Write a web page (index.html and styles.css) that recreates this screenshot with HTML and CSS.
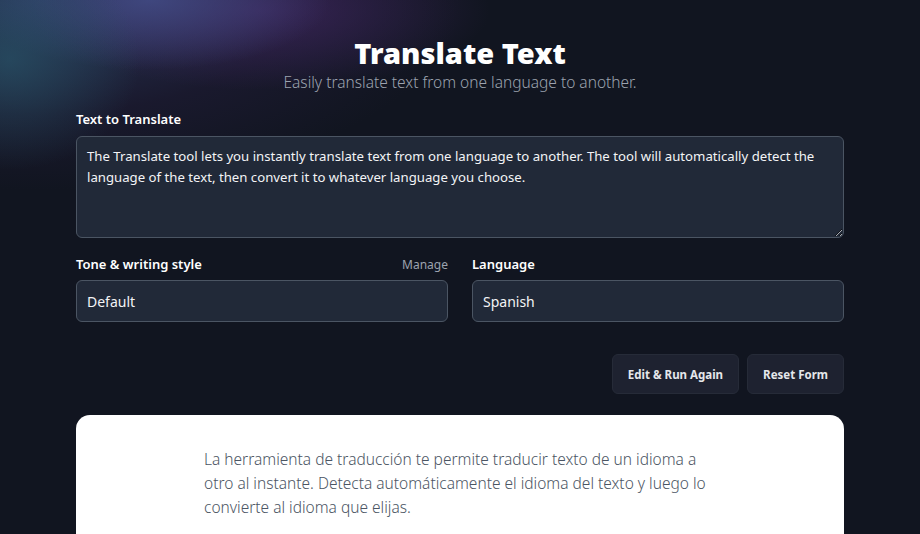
FILE: index.html
```html
<!DOCTYPE html>
<html lang="en">
<head>
    <meta charset="UTF-8">
    <meta name="viewport" content="width=device-width, initial-scale=1.0">
    <title>Translate Text</title>
    <link rel="stylesheet" href="styles.css">
</head>
<body>
    <div class="glow"></div>
    <div class="page">
        <header class="page-head">
            <h1>Translate Text</h1>
            <p>Easily translate text from one language to another.</p>
        </header>

        <div class="field">
            <label for="source">Text to Translate</label>
            <textarea id="source">The Translate tool lets you instantly translate text from one language to another. The tool will automatically detect the language of the text, then convert it to whatever language you choose.</textarea>
        </div>

        <div class="field-row">
            <div class="field">
                <div class="label-row">
                    <label>Tone &amp; writing style</label>
                    <a href="#" class="manage">Manage</a>
                </div>
                <div class="select">Default</div>
            </div>
            <div class="field">
                <div class="label-row">
                    <label>Language</label>
                </div>
                <div class="select">Spanish</div>
            </div>
        </div>

        <div class="actions">
            <button class="btn">Edit &amp; Run Again</button>
            <button class="btn">Reset Form</button>
        </div>

        <div class="result">
            <p>La herramienta de traducción te permite traducir texto de un idioma a otro al instante. Detecta automáticamente el idioma del texto y luego lo convierte al idioma que elijas.</p>
        </div>
    </div>
</body>
</html>
```

FILE: styles.css
```css
* {
    margin: 0;
    padding: 0;
    box-sizing: border-box;
    font-family: 'Noto Sans', 'Open Sans', sans-serif;
}

body {
    background: #111520;
    color: #fff;
    min-height: 100vh;
    overflow: hidden;
    position: relative;
}

/* top-left light leak */
.glow {
    position: absolute;
    top: 0;
    left: 0;
    width: 560px;
    height: 280px;
    background:
        radial-gradient(ellipse 130px 110px at 10px 60px, rgba(40, 84, 104, 0.7), rgba(40, 84, 104, 0) 100%),
        radial-gradient(ellipse 180px 70px at 150px 0, rgba(66, 76, 134, 0.85), rgba(66, 76, 134, 0) 100%),
        radial-gradient(ellipse 230px 80px at 260px 10px, rgba(62, 38, 94, 0.8), rgba(62, 38, 94, 0) 100%),
        radial-gradient(ellipse 420px 190px at 40px 0, rgba(46, 62, 100, 0.85), rgba(36, 30, 62, 0.45) 60%, rgba(17, 21, 32, 0) 100%);
    pointer-events: none;
}

.page {
    position: relative;
    width: 768px;
    margin: 0 auto;
    padding-top: 34px;
}

.page-head {
    text-align: center;
    margin-bottom: 18px;
}

.page-head h1 {
    font-size: 29px;
    font-weight: 900;
    line-height: 38px;
}

.page-head p {
    font-size: 15.5px;
    font-weight: 300;
    color: #9ca3af;
    line-height: 20px;
}

.field label {
    display: block;
    font-size: 13px;
    font-weight: 600;
    line-height: 18px;
    margin-bottom: 8px;
}

.field textarea {
    display: block;
    width: 100%;
    height: 102px;
    background: #212938;
    border: 1px solid #4b5563;
    border-radius: 6px;
    color: #f3f4f6;
    font-size: 13.2px;
    line-height: 21px;
    padding: 9px 10px;
    resize: vertical;
}

.field-row {
    display: grid;
    grid-template-columns: 1fr 1fr;
    gap: 24px;
    margin-top: 17px;
}

.label-row {
    display: flex;
    justify-content: space-between;
    align-items: center;
    margin-bottom: 7px;
}

.label-row label {
    margin-bottom: 0;
}

.manage {
    font-size: 12px;
    color: #9ca3af;
    text-decoration: none;
}

.select {
    height: 42px;
    background: #212938;
    border: 1px solid #4b5563;
    border-radius: 6px;
    font-size: 14px;
    color: #f3f4f6;
    padding: 0 10px;
    display: flex;
    align-items: center;
}

.actions {
    display: flex;
    justify-content: flex-end;
    gap: 8px;
    margin-top: 32px;
}

.btn {
    height: 40px;
    padding: 0 15px;
    background: #1e2230;
    border: 1px solid #262b38;
    border-radius: 6px;
    color: #e5e7eb;
    font-size: 11.5px;
    font-weight: 700;
    cursor: pointer;
}

.result {
    margin-top: 21px;
    background: #fff;
    border-radius: 14px;
    padding: 32px 0 40px;
}

.result p {
    width: 512px;
    margin: 0 auto;
    font-size: 15.5px;
    font-weight: 300;
    line-height: 24px;
    color: #4b5563;
}
```
